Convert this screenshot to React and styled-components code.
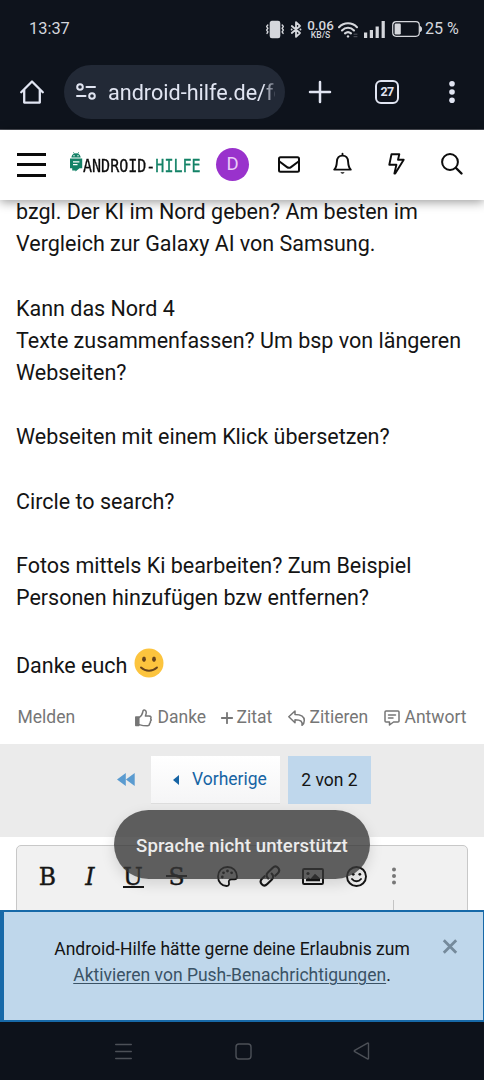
import React from 'react';
import styled, { createGlobalStyle } from 'styled-components';

const Global = createGlobalStyle`
  * { box-sizing: border-box; }
  body { margin: 0; background: #fff; font-family: Roboto, "Liberation Sans", sans-serif; color: #141414; }
  svg { display: block; flex: none; overflow: visible; }
`;

const Screen = styled.div`
  position: relative;
  width: 484px;
  height: 1080px;
  display: flex;
  flex-direction: column;
  overflow: hidden;
  background: #fff;
`;

const Label = styled.span`
  font-size: ${p => p.$size}px;
  line-height: 1;
  letter-spacing: ${p => p.$track || 0}px;
  margin-left: ${p => p.$gap || 0}px;
  font-weight: ${p => p.$weight || 400};
  color: ${p => p.$color || 'inherit'};
  white-space: nowrap;
`;

const Icon = styled.svg.attrs(p => ({ width: p.$w, height: p.$h, viewBox: `0 0 ${p.$w} ${p.$h}` }))`
  margin-left: ${p => p.$gap || 0}px;
  fill: ${p => (p.$solid ? 'currentColor' : 'none')};
  stroke: ${p => (p.$solid ? 'none' : 'currentColor')};
  stroke-width: ${p => p.$line || 2};
  stroke-linecap: round;
  stroke-linejoin: round;
`;

const StatusBar = styled.div`
  height: 58px;
  flex: none;
  display: flex;
  align-items: center;
  padding-left: 29px;
  background: #0e131c;
  color: #d5d7dc;
`;

const StatusIcons = styled.div`
  display: flex;
  align-items: center;
  margin-left: auto;
  width: 218px;
`;

const Rate = styled.div`
  width: 27px;
  margin: 0 0 0 6px;
  display: flex;
  flex-direction: column;
  align-items: center;
  font-weight: 500;
  white-space: nowrap;
  font-size: 13.4px;
  line-height: 11px;
  small { font-size: 8.6px; line-height: 8px; }
`;

const BrowserBar = styled.div`
  height: 72px;
  flex: none;
  display: flex;
  align-items: center;
  padding: 0 0 4px 20px;
  background: #0e131c;
  border-bottom: 1px solid #4b4e56;
  color: #e1e5f2;
`;

const Address = styled.div`
  width: 221px;
  height: 54px;
  margin-left: 20px;
  padding-left: 12px;
  border-radius: 27px;
  background: #222936;
  display: flex;
  align-items: center;
`;

const Url = styled.div`
  width: 167px;
  margin: 2px 0 0 12px;
  overflow: hidden;
  white-space: nowrap;
  font-size: 21.6px;
  line-height: 30px;
  mask-image: linear-gradient(90deg, #000 93%, rgba(0, 0, 0, .25));
`;

const TabCount = styled.div`
  width: 24px;
  height: 24px;
  margin-left: 44px;
  border: 2.4px solid #e1e5f2;
  border-radius: 6px;
  display: flex;
  align-items: center;
  justify-content: center;
  font-size: 12.5px;
  letter-spacing: -.6px;
  font-weight: 700;
`;

const SiteHeader = styled.header`
  height: 70px;
  flex: none;
  z-index: 2;
  display: flex;
  align-items: center;
  padding: 0 0 2px 17px;
  background: #fff;
  color: #0c0c0c;
  box-shadow: 0 2px 10px rgba(0, 0, 0, .4);
`;

const Burger = styled.div`
  width: 29px;
  height: 24px;
  margin-top: 1px;
  display: flex;
  flex-direction: column;
  justify-content: space-between;
  i { height: 3px; background: #0a0a0a; }
`;

const Wordmark = styled.div`
  width: 119px;
  margin: 3px 0 0 1px;
  font: 17.4px/20px "DejaVu Sans Mono", monospace;
  -webkit-text-stroke: .3px currentColor;
  white-space: nowrap;
  transform: scaleX(.864);
  transform-origin: left;
  b { font-weight: 400; color: #138267; }
`;

const Avatar = styled.div`
  width: 33px;
  height: 33px;
  margin-left: 14px;
  border-radius: 50%;
  background: #9932cc;
  color: #ebccf8;
  font-size: 18.5px;
  display: flex;
  align-items: center;
  justify-content: center;
`;

const Content = styled.main`
  flex: 1;
  min-height: 0;
  overflow: hidden;
  display: flex;
  flex-direction: column;
`;

const Post = styled.article`
  flex: none;
  height: 495.5px;
  margin-top: -4px;
  padding-left: 16px;
  font-size: 21.5px;
  line-height: 32.2px;
  white-space: nowrap;
`;

const Line = styled.div`
  height: 32.2px;
`;

const SmileLine = styled.div`
  height: 38px;
  display: flex;
  align-items: center;
  svg { margin: -6px 0 0 7px; }
`;

const Actions = styled.div`
  height: 52px;
  flex: none;
  display: flex;
  align-items: center;
  padding-left: 17.5px;
  color: #767676;
`;

const Action = styled.div`
  display: flex;
  align-items: center;
  width: ${p => p.$w}px;
`;

const Pager = styled.nav`
  height: 93.5px;
  flex: none;
  display: flex;
  padding: 12.5px 0 0 116.5px;
  background: #ebebeb;
  color: #1664a4;
`;

const PageCell = styled.div`
  height: 48px;
  width: ${p => p.$w}px;
  margin-left: ${p => p.$gap || 0}px;
  display: flex;
  align-items: center;
  span { padding-top: 1px; }
  ${p => p.$lift && 'padding-bottom: 1px;'}
  ${p => p.$button && 'padding-left: 22px; background: linear-gradient(#fff, #f5f5f6); border-bottom: 1px solid #dedede;'}
  ${p => p.$current && 'justify-content: center; background: #bfd7ec; color: #141414;'}
`;

const Editor = styled.div`
  flex: none;
  width: 452px;
  height: 90px;
  margin: 8px 0 0 16px;
  border: 1px solid #c8c8c8;
  border-radius: 5px;
  background: #f1f1f1;
`;

const Tools = styled.div`
  height: 60px;
  display: flex;
  align-items: center;
  padding-left: 22px;
  color: #161616;
`;

const Format = styled.div`
  position: relative;
  width: 21px;
  height: 22px;
  margin-left: ${p => p.$gap || 0}px;
  text-align: center;
  font: ${p => (p.$italic ? 'italic' : 'normal')} 23.5px/24px "DejaVu Serif", serif;
  -webkit-text-stroke: .4px currentColor;
  &::after {
    content: "";
    position: absolute;
    left: 0;
    right: 0;
    height: 2px;
    top: ${p => p.$rule || 0}px;
    background: ${p => (p.$rule ? 'currentColor' : 'none')};
  }
`;

const Divider = styled.div`
  width: 1px;
  height: 12px;
  margin: -6px 0 0 376px;
  background: #c4c4c4;
`;

const Toast = styled.div`
  position: absolute;
  z-index: 3;
  left: 114px;
  top: 810px;
  width: 256px;
  height: 69px;
  border-radius: 34.5px;
  background: rgba(55, 55, 55, .79);
  color: #ececec;
  box-shadow: 0 5px 14px rgba(0, 0, 0, .13);
  display: flex;
  align-items: center;
  justify-content: center;
  padding-top: 4px;
`;

const Notice = styled.aside`
  height: 112px;
  flex: none;
  display: flex;
  align-items: flex-start;
  border: 1px solid #1769a8;
  border-width: 2px 1px 2px 4px;
  background: #bfd7eb;
`;

const NoticeText = styled.p`
  width: 358px;
  margin: 24px 0 0 49px;
  text-align: center;
  white-space: nowrap;
  font-size: 17.5px;
  line-height: 26px;
  a { color: #3a5265; text-decoration: underline; text-decoration-thickness: 1px; text-underline-offset: 2px; }
`;

const SystemNav = styled.div`
  height: 58px;
  flex: none;
  display: flex;
  align-items: center;
  padding-left: 115px;
  background: #0d121b;
  color: #4c5057;
`;

export default function App() {
  return (
    <Screen>
      <Global />
      <StatusBar>
        <Label $size={16.4}>13:37</Label>
        <StatusIcons>
          <Icon $w={18} $h={17} $line={1.4}>
            <rect x="4.4" y="0.5" width="9.2" height="16" rx="1.5" fill="currentColor" />
            <path d="M1.8 4L.7 5.5l1.2 1.8L.7 9l1.2 1.8L1 12.4M16.2 4l1.1 1.5-1.2 1.8L17.3 9l-1.2 1.8 1 1.6" />
          </Icon>
          <Icon $w={10} $h={17} $gap={7} $line={1.8}>
            <path d="M.8 5L9 12l-4 3.8V1.2L9 5 .8 12" />
            <path d="M.6 8.5h.1M9.4 8.5h.1" />
          </Icon>
          <Rate>0.06<small>KB/S</small></Rate>
          <Icon $w={20} $h={17} $gap={4} $line={2.1}>
            <path d="M1 6.2C6 1 14 1 19 6.2M4 9.4c3.4-3.5 8.6-3.5 12 0M7 12.4c1.8-1.6 4.2-1.6 6 0" />
            <circle cx="10" cy="15.4" r="1.2" fill="currentColor" stroke="none" />
            <path d="M16 13.2h3M16 15.7h3" strokeWidth="1" opacity=".35" />
          </Icon>
          <Icon $w={21} $h={17} $gap={6} $solid>
            <path d="M0 11.5h3.2V17H0zM5.8 9H9v8H5.8zM11.6 5.5h3.2V17h-3.2zM17.6 0h3.2v17h-3.2z" />
          </Icon>
          <Icon $w={30} $h={16} $gap={7} $line={1.2}>
            <rect x=".7" y=".7" width="26.6" height="14.6" rx="3.5" />
            <rect x="2.6" y="2.6" width="6.2" height="10.8" rx="1.2" fill="currentColor" stroke="none" />
            <path d="M28 5.5c2 .8 2 4.2 0 5z" fill="currentColor" />
          </Icon>
          <Label $size={16.1} $gap={3}>25 %</Label>
        </StatusIcons>
      </StatusBar>

      <BrowserBar>
        <Icon $w={24} $h={24} $line={2.3}>
          <path d="M1.2 12.2L12 1.5l10.8 10.7M4.2 9.6v13h15.6v-13" />
        </Icon>
        <Address>
          <Icon $w={20} $h={17} $line={2}>
            <circle cx="4" cy="4" r="2.8" />
            <path d="M10.5 4H19M1 13h8.5" />
            <circle cx="16" cy="13" r="2.8" />
          </Icon>
          <Url>android-hilfe.de/fo</Url>
        </Address>
        <Icon $w={22} $h={22} $gap={24} $line={2.5}><path d="M11 1v20M1 11h20" /></Icon>
        <TabCount>27</TabCount>
        <Icon $w={6} $h={24} $gap={50} $solid>
          <circle cx="3" cy="3.7" r="2.8" /><circle cx="3" cy="12" r="2.8" /><circle cx="3" cy="20.2" r="2.8" />
        </Icon>
      </BrowserBar>

      <SiteHeader>
        <Burger><i /><i /><i /></Burger>
        <Icon $w={12} $h={25} $gap={24} $solid color="#138267">
          <path d="M1.4 5.6C1.6 3.5 2.7 2.2 4 1.7L3 .3l.5-.3 1.1 1.5a6 6 0 0 1 2.9 0L8.600 0l.5.3-1 1.400c1.300.5 2.400 1.800 2.600 3.900z" />
          <path d="M0 6.600h12.200v9.600H9.500L5.500 19.600v-1.200H2.200v-2.200H0z" />
          <circle cx="4" cy="3.800" r=".7" fill="#fff" /><circle cx="8" cy="3.800" r=".7" fill="#fff" />
          <path d="M3 9.200h6.400v1.200H3zM3 12h4.500v1.200H3z" fill="#fff" />
        </Icon>
        <Wordmark>ANDROID-<b>HILFE</b></Wordmark>
        <Avatar>D</Avatar>
        <Icon $w={22} $h={17} $gap={28.5} $line={2}>
          <rect x="1" y="1.200" width="20" height="14.600" rx="1.500" />
          <path d="M1.500 5.500L9 11.100c1.400 1 2.600 1 4 0l7.500-5.600" />
        </Icon>
        <Icon $w={19} $h={22} $gap={33} $line={1.9}>
          <path d="M9.500.8v1.500M1.200 16.600c2.300-2.200 2.500-4.400 2.700-8 .2-3.800 2.500-6 5.600-6s5.400 2.200 5.600 6c.2 3.600.4 5.800 2.700 8z" />
          <path d="M7.500 19.200h4c-.4 1.900-3.600 1.900-4 0z" fill="currentColor" stroke="none" />
        </Icon>
        <Icon $w={17} $h={22} $gap={36.5} $line={1.9}>
          <path d="M3.500 1.200h7.800L10 6.800h5.700L7.200 20.500h-.8l2-8.800H1.300z" />
        </Icon>
        <Icon $w={22} $h={22} $gap={35.5} $line={2}>
          <circle cx="9" cy="9" r="7.900" /><path d="M15 15l5.500 5.500" strokeWidth="2.400" />
        </Icon>
      </SiteHeader>

      <Content>
        <Post>
          <Line>bzgl. Der KI im Nord geben? Am besten im</Line>
          <Line>Vergleich zur Galaxy AI von Samsung.</Line>
          <Line />
          <Line>Kann das Nord 4</Line>
          <Line>Texte zusammenfassen? Um bsp von längeren</Line>
          <Line>Webseiten?</Line>
          <Line />
          <Line>Webseiten mit einem Klick übersetzen?</Line>
          <Line />
          <Line>Circle to search?</Line>
          <Line />
          <Line>Fotos mittels Ki bearbeiten? Zum Beispiel</Line>
          <Line>Personen hinzufügen bzw entfernen?</Line>
          <Line />
          <SmileLine>
            Danke euch
            <svg width="30" height="30" viewBox="0 0 30 30">
              <circle cx="15" cy="15" r="14.500" fill="#fcc43e" />
              <ellipse cx="10" cy="11.300" rx="1.900" ry="2.700" fill="#67431b" />
              <ellipse cx="20" cy="11.300" rx="1.900" ry="2.700" fill="#67431b" />
              <path d="M7 19.500c4.500 4.300 11.500 4.300 16 0" fill="none" stroke="#67431b" strokeWidth="1.900" strokeLinecap="round" />
            </svg>
          </SmileLine>
        </Post>
        <Actions>
          <Action $w={117.5}><Label $size={17.5}>Melden</Label></Action>
          <Action $w={86}>
            <Icon $w={17} $h={18} $line={1.5}>
              <path d="M.8 8h3v8.500h-3z" fill="currentColor" />
              <path d="M4 8.500c3-2 3.500-3.500 3.800-5.700C8 1 9 .7 10 1.200c1.700.8 1.400 3.300.4 5.800H14c2 0 2.500 1.500 1.700 2.700.7 1 .5 2-.3 2.600.3 1-.1 1.800-.8 2.200 0 1.500-.8 2.300-2.300 2.300-3.300 0-4.800-.2-8.300-1.200" />
            </Icon>
            <Label $size={17.5} $gap={5.5}>Danke</Label>
          </Action>
          <Action $w={67}>
            <Icon $w={12} $h={12} $line={1.8}><path d="M6 .8v10.400M.8 6h10.400" /></Icon>
            <Label $size={17.5} $gap={3.5}>Zitat</Label>
          </Action>
          <Action $w={96}>
            <Icon $w={17} $h={16} $line={1.5}>
              <path d="M.8 6.800L7 1v3.400c6 0 9.300 1.600 9.300 6 0 2.200-.9 3.800-2.300 4.900.7-3.800-1-5.600-7-5.600v3z" />
            </Icon>
            <Label $size={17.5} $gap={4.5}>Zitieren</Label>
          </Action>
          <Action $w={90}>
            <Icon $w={16} $h={16} $line={1.5}>
              <path d="M2 1h12a1 1 0 0 1 1 1v9a1 1 0 0 1-1 1H9.500L5.500 15v-3H2a1 1 0 0 1-1-1V2a1 1 0 0 1 1-1zM4.500 5h7M4.500 8h4.500" />
            </Icon>
            <Label $size={17.5} $gap={4.5}>Antwort</Label>
          </Action>
        </Actions>
        <Pager>
          <PageCell $w={18} $lift>
            <Icon $w={18} $h={13} $solid color="#5a9bd0"><path d="M8.800 0v13L0 6.500zM17.700 0v13L8.900 6.500z" /></Icon>
          </PageCell>
          <PageCell $w={129} $gap={16.5} $button>
            <Icon $w={6} $h={10} $solid><path d="M6 0v10L0 5z" /></Icon>
            <Label $size={17.5} $gap={13}>Vorherige</Label>
          </PageCell>
          <PageCell $w={83} $gap={8} $current><Label $size={17.5}>2 von 2</Label></PageCell>
        </Pager>
        <Editor>
          <Tools>
            <Format $gap={-2}>B</Format>
            <Format $gap={21.5} $italic>I</Format>
            <Format $gap={22} $rule={21}>U</Format>
            <Format $gap={22.5} $rule={10}>S</Format>
            <Icon $w={21} $h={21} $gap={29.5} $line={1.8}>
              <path d="M10.500 1C5 1 1 5 1 10.500S5 20 9.500 20c2.500 0 2.800-1.700 2.400-3.400-.5-2 .6-3.200 2.600-3.200h3c1.700 0 2.500-1 2.500-2.900C20 5 16 1 10.500 1z" />
              <g fill="currentColor" stroke="none"><circle cx="5.300" cy="11" r="1.400" /><circle cx="6.500" cy="6.800" r="1.400" /><circle cx="10.500" cy="5" r="1.400" /><circle cx="14.600" cy="6.800" r="1.400" /></g>
            </Icon>
            <Icon $w={22} $h={22} $gap={21.5} $line={2.1}>
              <path d="M9.200 13.500c-2-2-2-4.200-.3-5.900L13.500 3c1.800-1.800 4-1.800 5.500-.3s1.500 3.700-.2 5.500l-2.600 2.600" />
              <path d="M12.600 8.500c2 2 2 4.200.3 5.900L8.300 19c-1.800 1.800-4 1.800-5.500.3S1.300 15.600 3 13.800l2.600-2.600" />
            </Icon>
            <Icon $w={22} $h={17} $gap={21} $line={2}>
              <rect x="1" y="1" width="20" height="15" rx="1.200" />
              <circle cx="6" cy="5.500" r="1.600" fill="currentColor" stroke="none" />
              <path d="M4 13.200v-2l2.500-2 2 1.500 4.500-5 5 4.500v3z" fill="currentColor" stroke="none" />
            </Icon>
            <Icon $w={21} $h={21} $gap={21.5} $line={1.9}>
              <circle cx="10.500" cy="10.500" r="9.500" />
              <circle cx="7.200" cy="8.300" r="1.400" fill="currentColor" stroke="none" /><circle cx="13.800" cy="8.300" r="1.400" fill="currentColor" stroke="none" />
              <path d="M6 13c2.400 3 6.600 3 9 0" />
            </Icon>
            <Icon $w={4} $h={18} $gap={25} $solid color="#777">
              <circle cx="2" cy="2.500" r="2" /><circle cx="2" cy="9" r="2" /><circle cx="2" cy="15.500" r="2" />
            </Icon>
          </Tools>
          <Divider />
        </Editor>
      </Content>

      <Notice>
        <NoticeText>
          Android-Hilfe hätte gerne deine Erlaubnis zum<br />
          <a>Aktivieren von Push-Benachrichtigungen</a>.
        </NoticeText>
        <Icon $w={14} $h={68} $gap={32} $line={2.8} color="#758a9b"><path d="M.8 28.300l12.400 12.400M13.200 28.300L.8 40.700" strokeLinecap="butt" /></Icon>
      </Notice>

      <SystemNav>
        <Icon $w={17} $h={17} $line={1.4}><path d="M.7 1.500h15.600M.7 8.500h15.600M.7 15.500h15.600" /></Icon>
        <Icon $w={17} $h={17} $gap={103} $line={1.4}><rect x="1" y="1" width="15" height="15" rx="3" /></Icon>
        <Icon $w={17} $h={18} $gap={101} $line={1.4}><path d="M15.500 1.600v14.800c0 .6-.4.800-1 .5L1.700 9.600c-.6-.3-.6-.8 0-1.200L14.500 1.100c.6-.3 1-.1 1 .5z" /></Icon>
      </SystemNav>

      <Toast><Label $size={18.6} $track={0.08} $weight={500}>Sprache nicht unterstützt</Label></Toast>
    </Screen>
  );
}
